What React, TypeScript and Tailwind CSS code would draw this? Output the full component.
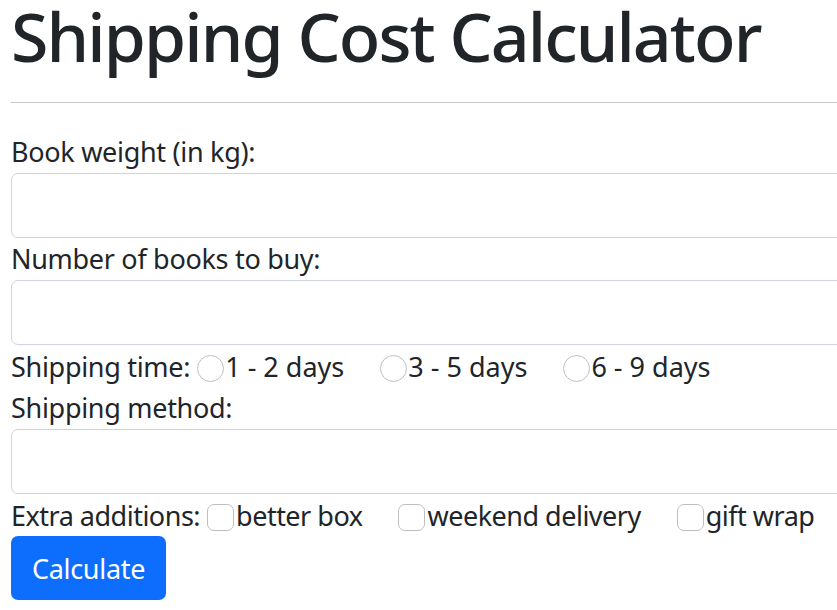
import React from "react";

const font = { fontFamily: '"Noto Sans", "Open Sans", sans-serif' };

function Radio({ label }: { label: string }) {
  return (
    <span className="inline-flex items-center">
      <span className="inline-block w-[27px] h-[27px] rounded-full border border-[#bfbfbf] bg-white mt-[3px]" />
      <span className="ml-[1px]">{label}</span>
    </span>
  );
}

function Check({ label }: { label: string }) {
  return (
    <span className="inline-flex items-center">
      <span className="inline-block w-[27px] h-[27px] rounded-[7px] border border-[#bfbfbf] bg-white mt-[3px]" />
      <span className="ml-[2px]">{label}</span>
    </span>
  );
}

export default function App() {
  return (
    <div className="w-[837px] h-[610px] overflow-hidden bg-white text-[#212529]" style={font}>
      <div className="w-[900px] pl-[11px]">
        <h1 className="text-[68px] leading-[86px] -mt-[7px] font-medium tracking-[-1.9px] whitespace-nowrap">
          Shipping Cost Calculator
        </h1>
        <div className="mt-[23px] border-t border-[#c8c9ca]" />
        <div className="mt-[28px] text-[27px] leading-[42px] tracking-[-0.3px]">
          <div>Book weight (in kg):</div>
          <div className="h-[65px] rounded-[7px] border border-[#ced4da] bg-white" />
          <div>Number of books to buy:</div>
          <div className="h-[65px] rounded-[7px] border border-[#ced4da] bg-white" />
          <div className="flex items-center pt-[2px] h-[42px] tracking-normal">
            <span className="mr-[7px] tracking-[-0.3px]">Shipping time:</span>
            <span className="flex items-center gap-[36px]">
              <Radio label="1 - 2 days" />
              <Radio label="3 - 5 days" />
              <Radio label="6 - 9 days" />
            </span>
          </div>
          <div>Shipping method:</div>
          <div className="h-[65px] rounded-[7px] border border-[#ced4da] bg-white" />
          <div className="flex items-center pt-[2px] h-[42px] tracking-[-0.5px]">
            <span className="mr-[7px]">Extra additions:</span>
            <span className="flex items-center gap-[36px]">
              <Check label="better box" />
              <Check label="weekend delivery" />
              <Check label="gift wrap" />
            </span>
          </div>
          <button className="h-[64px] w-[155px] rounded-[7px] bg-[#0d6efd] text-white text-[27px] leading-[42px] pt-[2px]">
            Calculate
          </button>
        </div>
      </div>
    </div>
  );
}
